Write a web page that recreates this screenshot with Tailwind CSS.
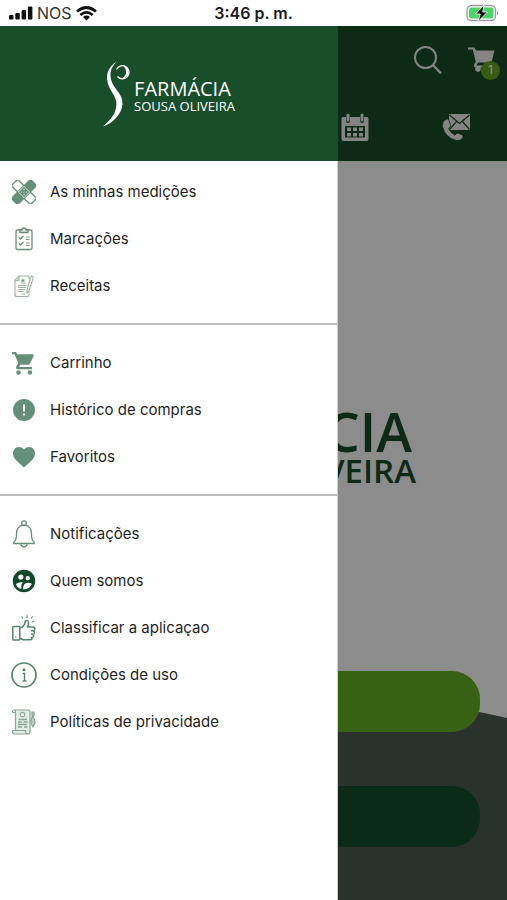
<!DOCTYPE html>
<html lang="pt">
<head>
<meta charset="utf-8">
<meta name="viewport" content="width=device-width, initial-scale=1">
<title>Farmácia Sousa Oliveira</title>
<script src="https://cdn.jsdelivr.net/npm/@tailwindcss/browser@4"></script>
</head>
<body class="flex min-h-screen flex-col bg-white font-['Inter','Liberation_Sans',sans-serif] text-[#1f1f1f]">

<!-- Status bar -->
<div class="grid h-[26px] grid-cols-3 items-center px-2">
  <div class="flex items-center gap-1">
    <svg class="h-[14px] w-[25px]" viewBox="0 0 25 14" fill="#111"><rect x="1" y="9" width="4.500" height="4.500" rx="1"/><rect x="7.300" y="7" width="4.500" height="6.500" rx="1"/><rect x="13.600" y="4" width="4.500" height="9.500" rx="1"/><rect x="19.900" y="0.500" width="4.500" height="13" rx="1"/></svg>
    <span class="text-[16px] leading-5 text-[#333]">NOS</span>
    <svg class="h-[15px] w-[21px]" viewBox="0 0 21 15" fill="none" stroke="#111" stroke-width="2.800"><path d="M1 5.500Q10.500-2.500 20 5.500M4.300 9Q10.500 3.800 16.700 9"/><path d="M10.500 14.500L7 11Q10.500 8.200 14 11Z" fill="#111" stroke="none"/></svg>
  </div>
  <div class="text-center text-[16px] leading-5 font-semibold whitespace-nowrap text-[#1a1a1a]">3:46 p. m.</div>
  <div class="flex justify-end">
    <svg class="h-[18px] w-[33px]" viewBox="0 0 33 18"><rect x="1" y="1.500" width="28.500" height="15" rx="4.500" fill="#fff" stroke="#9a9a9a" stroke-width="1.300"/><rect x="3" y="3.500" width="24.500" height="11" rx="2.500" fill="#4cd266"/><path d="M31 6.500q2 2.500 0 5z" fill="#999"/><path d="M18 1L9.500 10h4.800L12 17.500 21.500 8h-4.800z" fill="#111" stroke="#fff" stroke-width=".8"/></svg>
  </div>
</div>

<div class="relative flex flex-1 flex-col">

  <!-- Home page -->
  <div class="flex flex-1 flex-col">
    <header class="h-[135px] bg-[#184e29] text-[#f0f0f0]">
      <div class="flex h-[67px] items-center justify-end gap-6 pr-2">
        <button type="button" aria-label="Pesquisar"><svg class="size-[30px]" viewBox="0 0 30 30" fill="none" stroke="currentColor" stroke-width="2"><circle cx="12.500" cy="12.500" r="10.500"/><path d="M20 20l8 8.500" stroke-width="2.400"/></svg></button>
        <button type="button" aria-label="Carrinho, 1 artigo" class="relative"><svg class="h-[28px] w-[32px]" viewBox="0 0 32 28" fill="currentColor"><path d="M1 1.500h6.500l1.500 3h18.500l-3 12H11L9.500 19.500h14v2H8q-2.500-2 .8-5.500L5.800 3.500H1z"/><circle cx="11" cy="23" r="2.800"/><circle cx="22" cy="23" r="2.800"/></svg><span class="absolute -right-px -bottom-[6px] flex size-[19px] items-center justify-center rounded-full bg-[#67a91e] text-[12px] leading-none font-medium">1</span></button>
      </div>
      <nav class="grid h-[68px] grid-cols-5 items-center justify-items-center">
        <a href="#marcacoes" aria-label="Marcações" class="col-start-4"><svg class="size-7" viewBox="0 0 28 28"><path fill="currentColor" d="M2 4h3v4q0 2 2 2t2-2V4h10v4q0 2 2 2t2-2V4h3q1.500 0 1.500 2v20q0 2-2 2h-23q-2 0-2-2V6q0-2 1.500-2z"/><rect x="5.500" y="0.500" width="3" height="8" rx="1.500" fill="currentColor"/><rect x="19.500" y="0.500" width="3" height="8" rx="1.500" fill="currentColor"/><rect x="4" y="13" width="20" height="11.500" fill="#184e29"/><g fill="currentColor"><rect x="6" y="14.500" width="4" height="3.500"/><rect x="12" y="14.500" width="4" height="3.500"/><rect x="18" y="14.500" width="4" height="3.500"/><rect x="6" y="20" width="4" height="3.500"/><rect x="12" y="20" width="4" height="3.500"/><rect x="18" y="20" width="4" height="3.500"/></g></svg></a>
        <a href="#contactos" aria-label="Contactos"><svg class="size-7" viewBox="0 0 28 28"><rect x="7" y="1" width="21" height="16" fill="currentColor"/><path d="M7.500 2L17.500 10.500 27.500 2M7.500 16.500L14.500 8.500M27.500 16.500L20.500 8.500" fill="none" stroke="#184e29" stroke-width="1.200"/><path d="M5 6q-5 1.500-4.500 7.500Q3 24.500 14.500 27.500q5 .5 6.500-3.500.5-1.500-1-2.300l-4-1.500q-1.500-.2-3 2Q8.500 20 6.500 15.500q2.500-1.500 2-3.500L6.800 7Q6.300 5.500 5 6z" fill="currentColor" stroke="#184e29" stroke-width=".8"/></svg></a>
      </nav>
    </header>

    <main class="flex flex-1 flex-col">
      <div class="flex flex-1 flex-col items-end justify-center pt-[64px] pr-[91px] font-['Open_Sans',sans-serif] font-semibold text-[#184e29]">
        <div class="pr-1 text-[54px] leading-[46px]">FARMÁCIA</div>
        <div class="text-[33px] leading-[34px]">SOUSA OLIVEIRA</div>
      </div>
      <section class="relative flex flex-col gap-[54px] px-[27px] pb-[53px]">
        <svg class="absolute inset-x-0 bottom-0 h-[200px] w-full" viewBox="0 0 507 200" preserveAspectRatio="none" fill="#4b5c50"><path d="M0 40Q230-45 507 18V200H0z"/></svg>
        <button type="button" aria-label="Encomendar" class="relative h-[61px] rounded-[28px] bg-[#66b224]"></button>
        <button type="button" aria-label="Enviar receita" class="relative h-[61px] rounded-[28px] bg-[#164e2c]"></button>
      </section>
    </main>
  </div>

  <div class="absolute inset-0 bg-black/45"></div>

  <!-- Navigation drawer -->
  <aside class="absolute inset-y-0 left-0 w-2/3 border-r border-[#ccc] bg-white">
    <div class="-mr-px flex h-[135px] items-center justify-center bg-[#184e29] text-white">
      <svg class="h-[66px] w-[28px]" viewBox="0 0 28 66"><path d="M14 .5C4 6 2 16 6 25.500C10 34 15 38 13 47C11 56 6 60 0 65.500C10 62 19 53 19.500 43C20 33 11 28 8.500 20C6 12 8 6 14 .5z" fill="#fff"/><path d="M14.500 15.500a6.600 6.600 0 1 0-1-7" fill="none" stroke="#fff" stroke-width="1.200"/><path d="M20 4.500q7 1.500 5.500 8-2 5-7 5 5-2.500 4.500-7 0-3-3-6z" fill="#fff"/></svg>
      <div class="pt-1 pl-[3px] font-['Open_Sans',sans-serif] font-medium whitespace-nowrap">
        <div class="text-[20px] leading-5">FARMÁCIA</div>
        <div class="text-[13px] leading-[14px]">SOUSA OLIVEIRA</div>
      </div>
    </div>

    <nav class="text-[15px] leading-5">
      <ul class="border-b-2 border-[#bcbcbc] pt-[7px] pb-[14px]">
        <li><a href="#medicoes" class="flex h-[47px] items-center gap-[14px] px-3">
          <svg class="size-6" viewBox="0 0 24 24"><g stroke="#668f79" stroke-width="1.300"><rect x="-1.500" y="7.600" width="27" height="8.800" rx="2" transform="rotate(45 12 12)" fill="#fff"/><rect x="-1.500" y="7.600" width="27" height="8.800" rx="2" transform="rotate(-45 12 12)" fill="#668f79"/></g><path d="M6.400 12L12 6.400 17.600 12 12 17.600z" fill="#668f79" stroke="#fff" stroke-width=".7"/><g fill="#fff"><circle cx="12" cy="9.400" r=".6"/><circle cx="12" cy="14.600" r=".6"/><circle cx="9.400" cy="12" r=".6"/><circle cx="14.600" cy="12" r=".6"/><circle cx="12" cy="12" r=".6"/></g></svg>
          As minhas medições</a></li>
        <li><a href="#marcacoes" class="flex h-[47px] items-center gap-[14px] px-3">
          <svg class="size-6" viewBox="0 0 24 24" fill="none" stroke="#668f79" stroke-width="1.300"><rect x="4" y="3" width="16" height="19.500" rx="1.500"/><path d="M8 5.500V3h2q0-2 2-2t2 2h2v2.500z" fill="#dfe9e3"/><path d="M7 10.500l1.500 1.500 3-3M7 16.500l1.500 1.500 3-3"/><path d="M14 10h3.500M14 12.500h3.500M14 16h3.500M14 18.500h3.500" stroke-width=".9"/></svg>
          Marcações</a></li>
        <li><a href="#receitas" class="flex h-[47px] items-center gap-[14px] px-3">
          <svg class="size-6" viewBox="0 0 24 24" fill="none" stroke="#9bb3a5" stroke-width="1.100"><path d="M17 17v3.500q0 2-2 2H5q-2 0-2-2V6l4-4h10V5"/><path d="M3 6.500h4v-4.500" fill="#d0ddd5"/><path d="M19.800 2q2 .5 1.200 2.500L17 17l-2 2 0-3L18.700 3z" fill="#fff"/><path d="M6 11.500h8.500M6 13.500h8M6 15.500h7M6 17.500h6M9.500 20h4" stroke-width="1.200"/><circle cx="11" cy="6.500" r="1.200" fill="#668f79"/><path d="M8.500 9h5"/></svg>
          Receitas</a></li>
      </ul>
      <ul class="border-b-2 border-[#bcbcbc] py-[14px]">
        <li><a href="#carrinho" class="flex h-[47px] items-center gap-[14px] px-3">
          <svg class="size-6" viewBox="0 0 24 24" fill="#668f79"><path d="M0 1h4l1.300 2.300h15.500q1.500 0 1 1.500l-4 8q-.5 1-1.500 1H8.300L7.200 16H20v2.200H6q-3-.5-1.500-3.300L6.300 12 2.500 3.200H0z"/><circle cx="6.500" cy="21.500" r="2.200"/><circle cx="18" cy="21.500" r="2.200"/></svg>
          Carrinho</a></li>
        <li><a href="#historico" class="flex h-[47px] items-center gap-[14px] px-3">
          <svg class="size-6" viewBox="0 0 24 24"><circle cx="12" cy="12" r="11" fill="#668f79"/><path d="M11 6.500h2v7h-2zM11 15.500h2v2h-2z" fill="#fff"/></svg>
          Histórico de compras</a></li>
        <li><a href="#favoritos" class="flex h-[47px] items-center gap-[14px] px-3">
          <svg class="size-6" viewBox="0 0 24 24" fill="#668f79"><path d="M12 22.500C4 15.500 1 12.800 1 8.300 1 4.800 3.700 2 7 2c2 0 3.800 1 5 2.500C13.200 3 15 2 17 2c3.300 0 6 2.800 6 6.300 0 4.500-3 7.200-11 14.200z"/></svg>
          Favoritos</a></li>
      </ul>
      <ul class="py-[14px]">
        <li><a href="#notificacoes" class="flex h-[47px] items-center gap-[14px] px-3">
          <svg class="h-[28px] w-6" viewBox="0 0 24 28" fill="none" stroke="#668f79" stroke-width="1.300"><circle cx="12" cy="3.200" r="2.300"/><path d="M9 24q0 2.800 3 2.800t3-2.800"/><path d="M2 23.500q-.8-1 .3-1.800Q4.500 20 4.500 14q0-8.500 7.500-8.800 7.500.3 7.500 8.800 0 6 2.200 7.700 1.100.8.300 1.800z" fill="#fff"/></svg>
          Notificações</a></li>
        <li><a href="#quem-somos" class="flex h-[47px] items-center gap-[14px] px-3">
          <svg class="size-6" viewBox="0 0 24 24"><circle cx="12" cy="12" r="11.200" fill="#104825"/><g fill="#fff"><circle cx="8.800" cy="8" r="2.600"/><circle cx="15.800" cy="9.200" r="2.100"/><path d="M4 15Q6 12.800 11 13.300 9 14.800 9.300 20 5 18.800 4 15zM11.200 20.500q-.5-6.700 4.700-6.700 2.800 0 4 1.200Q18 20 11.200 20.500z"/></g></svg>
          Quem somos</a></li>
        <li><a href="#classificar" class="flex h-[47px] items-center gap-[14px] px-3">
          <svg class="h-[28px] w-6" viewBox="0 0 24 28" fill="none" stroke="#55866b" stroke-width="1.500" stroke-linejoin="round"><rect x=".8" y="12.500" width="7" height="13.500" rx=".8"/><path d="M7.800 14l2.500-1q3-2.500 3-6 2.500-1.500 3.200 1.500.2 2-1 4.500h5.500q2 .3 1.800 2.200-.3 1.500-1.500 1.500 1.700.8 1.200 2.300-.5 1.300-1.700 1.300 1.200 1 .7 2.200-.5 1-1.500 1 .5 2-1.800 2.200H11l-3.200-1.500M19 16.700h2.300M19 20.300h2M18.500 23.500h2"/><path d="M15 4V1.200M11 4.500L9.500 2.500M19 4.500l1.500-2M20 8l2.200-.8" stroke-width="1.200"/><path d="M3 23h1.500" stroke-width="1.200"/></svg>
          Classificar a aplicaçao</a></li>
        <li><a href="#condicoes" class="flex h-[47px] items-center gap-[14px] px-3">
          <svg class="-mx-px size-[26px]" viewBox="0 0 26 26"><circle cx="13" cy="13" r="12" fill="none" stroke="#55866b" stroke-width="1.700"/><circle cx="13" cy="7.700" r="1.500" fill="#55866b"/><path d="M11.500 11.500h2V19M11.500 19h4" fill="none" stroke="#55866b" stroke-width="1.400"/></svg>
          Condições de uso</a></li>
        <li><a href="#privacidade" class="flex h-[47px] items-center gap-[14px] px-3">
          <svg class="h-[26px] w-6" viewBox="0 0 24 26" fill="none" stroke="#86a793" stroke-width="1.200"><path d="M3.500 21V3q0-2-2-2H16q2 0 2 2v20q0 2-2 2H2Q0 24.500.5 21.500h13v1.500q.5 2 2.500 2" fill="#e3ece6"/><path d="M1.500 1Q.3 1.500.3 3.500h3.200"/><circle cx="10.500" cy="5.500" r="2.200" fill="#fff"/><path d="M6.500 10.500h8.500M6 13h4M11.500 13h4M6 15.500h9M6 18h4M12 18h3.500" stroke-width="1.500"/><path d="M20 3h2v4h-2zM20.500 7q3 4 2.500 7l-2 4-2-4q-.5-3 1.500-7z" fill="#b9cdc1"/></svg>
          Políticas de privacidade</a></li>
      </ul>
    </nav>
  </aside>
</div>
</body>
</html>
